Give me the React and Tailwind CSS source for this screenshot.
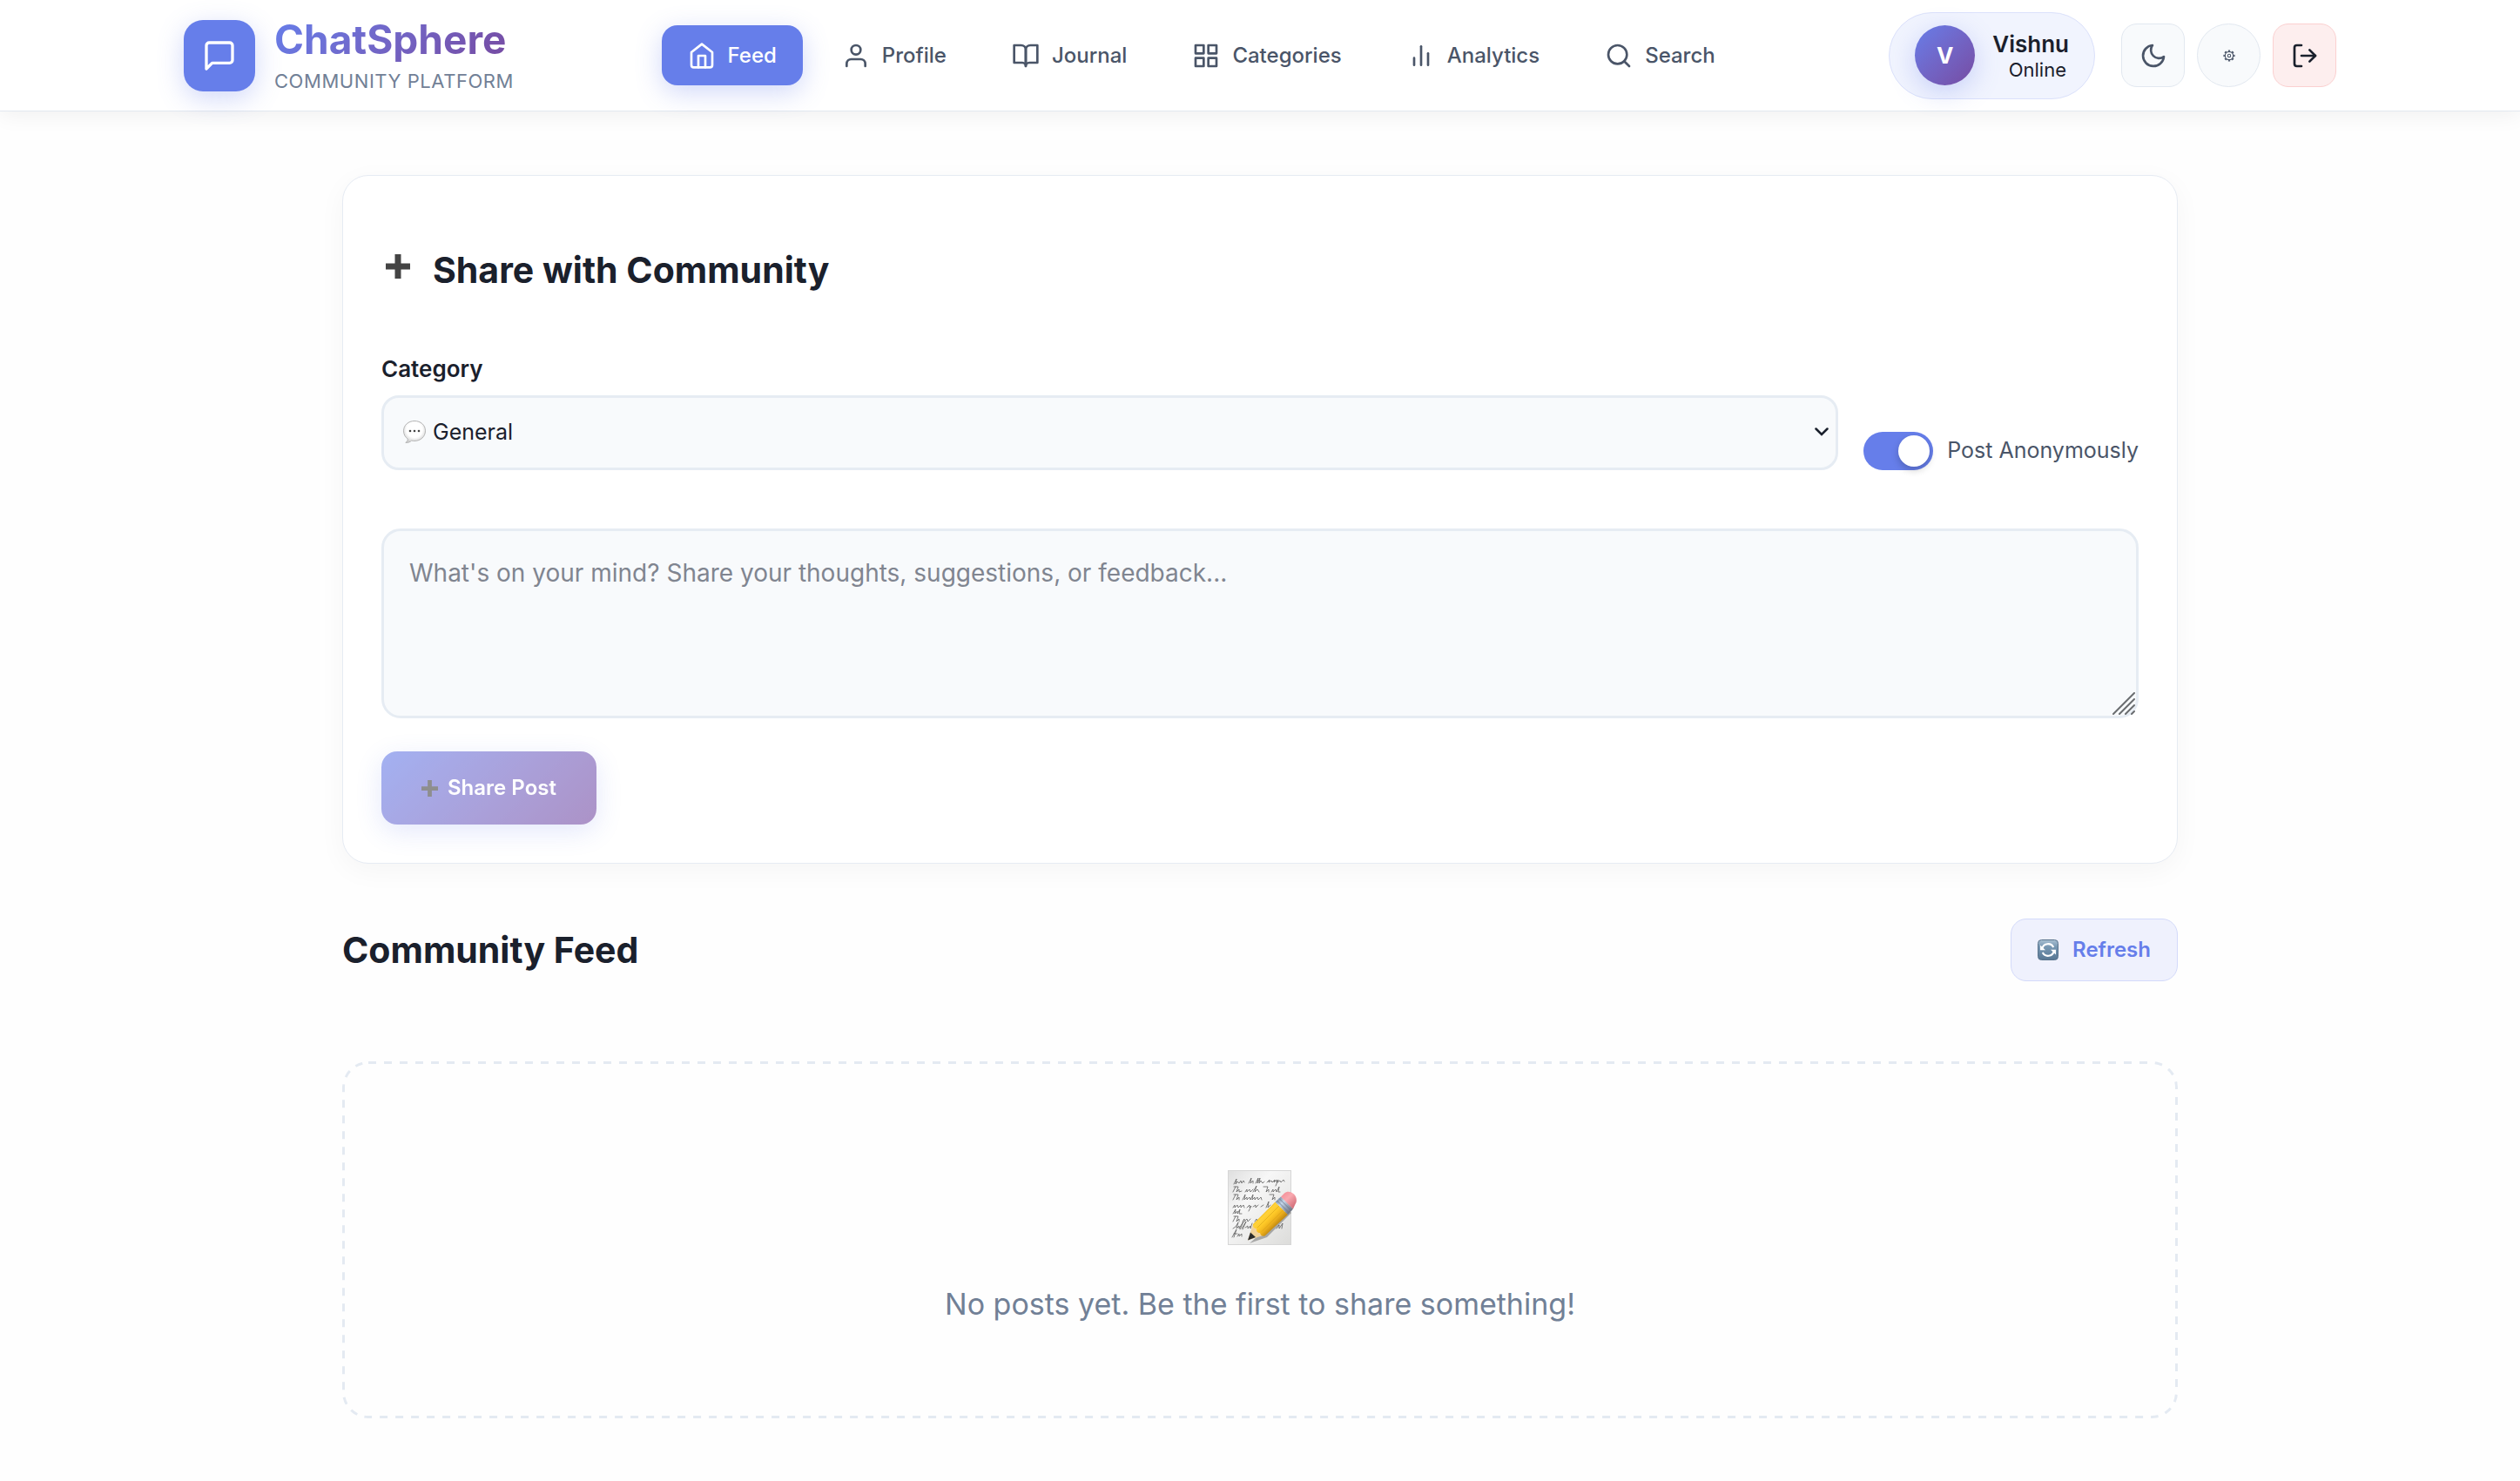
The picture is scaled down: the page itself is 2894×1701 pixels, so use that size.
import React, { useState } from "react";

function Icon({ className = "size-8", children, strokeWidth = 2 }) {
  return (
    <svg
      viewBox="0 0 24 24"
      fill="none"
      stroke="currentColor"
      strokeWidth={strokeWidth}
      strokeLinecap="round"
      strokeLinejoin="round"
      className={"shrink-0 " + className}
      aria-hidden="true"
    >
      {children}
    </svg>
  );
}

const NAV = [
  {
    label: "Feed",
    icon: (
      <>
        <path d="M3 9l9-7 9 7v11a2 2 0 0 1-2 2H5a2 2 0 0 1-2-2z" />
        <polyline points="9 22 9 12 15 12 15 22" />
      </>
    ),
  },
  {
    label: "Profile",
    icon: (
      <>
        <path d="M20 21v-2a4 4 0 0 0-4-4H8a4 4 0 0 0-4 4v2" />
        <circle cx="12" cy="7" r="4" />
      </>
    ),
  },
  {
    label: "Journal",
    icon: (
      <>
        <path d="M2 3h6a4 4 0 0 1 4 4v14a3 3 0 0 0-3-3H2z" />
        <path d="M22 3h-6a4 4 0 0 0-4 4v14a3 3 0 0 1 3-3h7z" />
      </>
    ),
  },
  {
    label: "Categories",
    icon: (
      <>
        <rect x="3" y="3" width="7" height="7" />
        <rect x="14" y="3" width="7" height="7" />
        <rect x="14" y="14" width="7" height="7" />
        <rect x="3" y="14" width="7" height="7" />
      </>
    ),
  },
  {
    label: "Analytics",
    icon: (
      <>
        <line x1="18" y1="20" x2="18" y2="10" />
        <line x1="12" y1="20" x2="12" y2="4" />
        <line x1="6" y1="20" x2="6" y2="14" />
      </>
    ),
  },
  {
    label: "Search",
    icon: (
      <>
        <circle cx="11" cy="11" r="8" />
        <path d="m21 21-4.35-4.35" />
      </>
    ),
  },
];

function Header() {
  return (
    <header className="border-b border-[#e2e8f0] bg-white shadow-[0_4px_24px_rgba(0,0,0,0.06)]">
      <div className="mx-auto flex min-h-[127px] max-w-[2472px] items-center justify-between">
        <a href="#home" className="flex items-center gap-[22px]">
          <span className="flex size-[82px] items-center justify-center rounded-[22px] bg-[#667eea] text-white shadow-[0_8px_30px_rgba(102,126,234,0.3)]">
            <Icon className="size-10">
              <path d="M21 15a2 2 0 0 1-2 2H7l-4 4V5a2 2 0 0 1 2-2h14a2 2 0 0 1 2 2z" />
            </Icon>
          </span>
          <span className="flex flex-col gap-[2px] pt-[5px]">
            <span className="self-start bg-linear-135 from-[#667eea] to-[#764ba2] bg-clip-text text-[46px] leading-[52px] font-bold text-transparent">
              ChatSphere
            </span>
            <span className="text-[22px] leading-[40px] tracking-wide text-[#718096]">COMMUNITY PLATFORM</span>
          </span>
        </a>

        <nav className="flex items-center gap-[15px]">
          {NAV.map((item, i) => (
            <a
              key={item.label}
              href={"#" + item.label.toLowerCase()}
              className={
                i === 0
                  ? "flex h-[69px] items-center gap-[14px] rounded-[18px] bg-[#667eea] px-[30px] text-[24px] font-medium text-white shadow-[0_8px_30px_rgba(102,126,234,0.3)]"
                  : "flex h-[69px] items-center gap-[14px] rounded-[18px] px-[30px] text-[24px] font-medium text-[#4a5568]"
              }
            >
              <Icon>{item.icon}</Icon>
              {item.label}
            </a>
          ))}
        </nav>

        <div className="flex items-center gap-[30px]">
          <div className="flex h-[100px] items-center gap-[20px] rounded-full border border-[#dbe1fb] bg-[#f1f4fe] px-[29px]">
            <span className="flex size-[69px] items-center justify-center rounded-full bg-linear-135 from-[#667eea] to-[#764ba2] text-[26px] font-bold text-white shadow-[0_8px_30px_rgba(102,126,234,0.3)]">
              V
            </span>
            <span className="flex flex-col items-end">
              <span className="text-[26px] leading-[32px] font-semibold text-[#1a202c]">Vishnu</span>
              <span className="pr-[3px] text-[22px] leading-[26px] text-[#1a202c]">Online</span>
            </span>
          </div>
          <div className="flex items-center gap-[14px]">
            <button
              type="button"
              aria-label="Dark mode"
              className="flex size-[73px] items-center justify-center rounded-[18px] border border-[#e2e8f0] bg-[#f8fafc] text-[#4a5568]"
            >
              <Icon>
                <path d="M21 12.79A9 9 0 1 1 11.21 3 7 7 0 0 0 21 12.79z" />
              </Icon>
            </button>
            <button
              type="button"
              aria-label="Settings"
              className="flex size-[73px] items-center justify-center rounded-full border border-[#e2e8f0] bg-[#f8fafc] text-[#4a5568]"
            >
              <svg viewBox="0 0 14 14" className="size-[14px]" fill="none" stroke="currentColor" aria-hidden="true">
                <circle cx="7" cy="7" r="4.700" strokeWidth="1.200" />
                <circle cx="7" cy="7" r="1.700" strokeWidth="1.100" />
                <circle cx="7" cy="7" r="5.900" strokeWidth="1.400" pathLength="16" strokeDasharray="1 1" strokeDashoffset="0.500" />
              </svg>
            </button>
            <button
              type="button"
              aria-label="Log out"
              className="flex size-[73px] items-center justify-center rounded-[18px] border border-[#fbd0d0] bg-[#fdeeee] text-[#1a202c]"
            >
              <Icon>
                <path d="M9 21H5a2 2 0 0 1-2-2V5a2 2 0 0 1 2-2h4" />
                <polyline points="16 17 21 12 16 7" />
                <line x1="21" y1="12" x2="9" y2="12" />
              </Icon>
            </button>
          </div>
        </div>
      </div>
    </header>
  );
}

function Plus({ className }) {
  return (
    <svg viewBox="0 0 28 28" fill="currentColor" className={"shrink-0 " + className} aria-hidden="true">
      <path d="M10.500 0h7v10.500H28v7H17.500V28h-7V17.500H0v-7h10.500z" />
    </svg>
  );
}

function SpeechBalloon({ className }) {
  return (
    <svg viewBox="0 0 28 28" className={className} aria-hidden="true">
      <defs>
        <radialGradient id="balloon" cx="0.5" cy="0.4" r="0.6">
          <stop offset="0.6" stopColor="#ffffff" />
          <stop offset="1" stopColor="#cfcfcf" />
        </radialGradient>
      </defs>
      <path
        d="M14 1.500C7 1.500 1.500 6.300 1.500 12.800c0 4 1.800 7.200 4.700 9.200 .2 1.700-.6 3.200-2.400 4.400 2.800 .2 5.200-.6 6.800-2.400 1.100 .3 2.200 .4 3.400 .4 7 0 12.500-4.900 12.500-11.600S21 1.500 14 1.500z"
        fill="url(#balloon)"
        stroke="#b5b5b5"
        strokeWidth="1"
      />
      <circle cx="9" cy="13" r="1.300" fill="#444" />
      <circle cx="14" cy="13" r="1.300" fill="#444" />
      <circle cx="19" cy="13" r="1.300" fill="#444" />
    </svg>
  );
}

function RefreshTile() {
  return (
    <svg viewBox="0 0 24 24" className="size-6 shrink-0" aria-hidden="true">
      <defs>
        <linearGradient id="tile" x1="0" y1="0" x2="0" y2="1">
          <stop offset="0" stopColor="#a9c0d2" />
          <stop offset="0.35" stopColor="#7898b3" />
          <stop offset="1" stopColor="#587793" />
        </linearGradient>
      </defs>
      <rect x="0.5" y="0.5" width="23" height="23" rx="4" fill="url(#tile)" stroke="#5a748c" />
      <path d="M5.200 10.500a7 7 0 0 1 13-1.500" fill="none" stroke="#fff" strokeWidth="2.200" />
      <path d="M18.800 13.500a7 7 0 0 1-13 1.500" fill="none" stroke="#fff" strokeWidth="2.200" />
      <path d="M3 6.500v5.700h6z" fill="#fff" />
      <path d="M21 17.500v-5.700h-6z" fill="#fff" />
    </svg>
  );
}

function MemoIcon() {
  return (
    <svg viewBox="-4 0 84 88" className="h-[88px] w-[84px]" aria-hidden="true">
      <defs>
        <linearGradient id="paper" x1="0" y1="0" x2="1" y2="1">
          <stop offset="0" stopColor="#dfdfdf" />
          <stop offset="0.35" stopColor="#f7f7f7" />
          <stop offset="1" stopColor="#dcdcda" />
        </linearGradient>
        <linearGradient id="pencil" gradientUnits="userSpaceOnUse" x1="42" y1="50" x2="57" y2="65">
          <stop offset="0" stopColor="#f3b90f" />
          <stop offset="0.12" stopColor="#ffd23c" />
          <stop offset="0.4" stopColor="#ffca28" />
          <stop offset="0.7" stopColor="#edb01c" />
          <stop offset="1" stopColor="#bf8710" />
        </linearGradient>
        <linearGradient id="ferrule" gradientUnits="userSpaceOnUse" x1="58" y1="35" x2="73" y2="50">
          <stop offset="0" stopColor="#7f93ab" />
          <stop offset="0.3" stopColor="#c5d6e8" />
          <stop offset="0.6" stopColor="#9aa6b8" />
          <stop offset="1" stopColor="#6c6f7a" />
        </linearGradient>
        <linearGradient id="eraser" gradientUnits="userSpaceOnUse" x1="64" y1="27" x2="79" y2="43">
          <stop offset="0" stopColor="#f58f98" />
          <stop offset="0.4" stopColor="#f9a9b0" />
          <stop offset="1" stopColor="#cf6873" />
        </linearGradient>
      </defs>
      <rect x="1.500" y="1.500" width="72" height="85" fill="url(#paper)" stroke="#d6d6d6" />
      <g fill="none" stroke="#606060" strokeWidth="0.800" strokeLinecap="round" strokeLinejoin="round">
        <path d="M8 17l3-6-1 6 2-3 2 2 2-3 1 3 2-3 1 2M25 16l3-6-1 6 3-3v3M33 16l3-6-1 6 3-6-1 6 2-3 2 3 2-2M46 15l3-3-1 3 3-2 1 2 3-3-1 3 3-3 0 3 2-3-3 7M58 15l3-2 1 2 3-3 1 2" />
        <path d="M7 26l3-6M8 20h5l-2 6 3-3v3l3-1M21 26l2-3v3l3-3 1 3 3-3M30 26l4-7-2 7 3-3 2 3M42 20h5l-2 6 3-3v3M51 26l2-3v3l3-3 1 3 3-6-1 6h2" />
        <path d="M7 35l3-6M8 29h5l-2 6 3-3v3M18 35l3-6-1 6 3-3v3l3-3 1 3 3-6-1 6 3-3v3l3-3 1 3 3-3 1 3M49 29h5l-2 6 3-3v3" />
        <path d="M7 44l2-3v3l3-3 1 3 3-3v3l3-3 1 3M23 44l3-3v3l2-2-3 6M30 43l3-2v3l3-3M39 43l3-2M45 44l3-7-1 7 3-3" />
        <path d="M7 51l3-5-1 5 3-3v3l3-5-1 5h3" />
        <path d="M7 60l3-6M8 54h5l-2 6 3-3v3M18 60l2-3v3l3-3 1 3 3-3M32 60l2-3 1 3 2-3" />
        <path d="M7 68l3-2 3-5-2 7 3-3v3l5-8-4 9M17 68l5-8-4 9M21 67l3-2v3l3-3v3l2-6" />
        <path d="M6 78l5-9-3 9M8 74h4M12 77l2-3v3l3-3v3" />
        <path d="M57 68l3-4v4l4-6-1 6" />
      </g>
      <path d="M26 85l20-7 28-28-4-4z" fill="#000" opacity="0.280" />
      <path d="M24 81.500L30 63l13 12.500z" fill="#f1d29a" />
      <path d="M24 81.500l3-9 6 5.500z" fill="#2b2b2b" />
      <path d="M30 63l25.500-25.500L70 52 43.500 76.500c-3 1-5-1-5.500-3.500-3 0-4.500-2-4-5-2.500 0-4.500-2-4-5z" fill="url(#pencil)" />
      <path d="M35 67l25-25M40 71.500l25-25" stroke="#cf9a12" strokeWidth="0.700" opacity="0.700" />
      <path d="M55.500 37.500l6.500-6L76 45.500 70 52z" fill="url(#ferrule)" />
      <path d="M57.500 36L71.500 50M60 33.500l14 14" stroke="#66758a" strokeWidth="0.800" />
      <path d="M62 31.500l4-4c3-3 8-2 11 1s4 8 1.500 11.500L76 45.500z" fill="url(#eraser)" />
    </svg>
  );
}

function ShareCard() {
  const [anonymous, setAnonymous] = useState(true);
  return (
    <section className="rounded-[30px] border border-[#e6ebf3] bg-white p-[44px] shadow-[0_8px_32px_rgba(0,0,0,0.04)]">
      <h2 className="mt-[38px] flex items-center gap-[26px] pl-[5px] text-[41px] leading-[52px] font-bold text-[#1a202c]">
        <Plus className="h-9 w-7 pb-2 text-[#444444]" />
        Share with Community
      </h2>

      <div className="mt-[72px] flex items-end gap-[29px]">
        <div className="flex flex-1 flex-col gap-[14px]">
          <label htmlFor="category" className="text-[26px] leading-[32px] font-semibold text-[#1a202c]">
            Category
          </label>
          <div className="relative">
            <select
              id="category"
              className="block h-[86px] w-full appearance-none rounded-[20px] border-3 border-[#e6ecf3] bg-[#f8fafc] pr-[60px] pl-[56px] text-[25px] text-[#1a202c]"
            >
              <option>General</option>
            </select>
            <SpeechBalloon className="pointer-events-none absolute top-[28px] left-6 size-7" />
            <svg
              viewBox="0 0 16 10"
              className="pointer-events-none absolute top-[37px] right-[11px] h-[10px] w-4"
              fill="none"
              stroke="#1a202c"
              strokeWidth="2.500"
              aria-hidden="true"
            >
              <path d="M1.500 1.500L8 8l6.500-6.500" strokeLinecap="round" />
            </svg>
          </div>
        </div>
        <label className="flex h-11 items-center gap-4 text-[25px] text-[#4a5568]">
          <input
            type="checkbox"
            checked={anonymous}
            onChange={(e) => setAnonymous(e.target.checked)}
            className="flex h-11 w-20 appearance-none items-center rounded-full bg-[#cbd5e0] px-1 before:size-9 before:rounded-full before:bg-white before:shadow-[0_4px_8px_rgba(0,0,0,0.2)] before:content-[''] checked:justify-end checked:bg-[#667eea]"
          />
          Post Anonymously
        </label>
      </div>

      <div className="relative mt-[67px]">
        <textarea
          aria-label="Post content"
          placeholder="What's on your mind? Share your thoughts, suggestions, or feedback..."
          className="block h-[218px] w-full resize-none rounded-[22px] border-3 border-[#e6ecf3] bg-[#f8fafc] px-[29px] py-[25px] text-[28px] leading-[46px] text-[#1a202c] placeholder:text-[#808590]"
        />
        <svg
          viewBox="0 0 26 26"
          className="pointer-events-none absolute right-1 bottom-1 size-[26px]"
          stroke="#6b6d70"
          strokeWidth="2"
          strokeLinecap="round"
          aria-hidden="true"
        >
          <path d="M1 25L25 1M8 25L25 8M15 25l10-10M22 25l3-3" />
        </svg>
      </div>

      <button
        type="button"
        className="mt-[38px] flex h-[84px] items-center gap-[11px] rounded-[18px] bg-linear-135 from-[#667eea] to-[#764ba2] px-[46px] text-[24px] font-semibold text-white opacity-60 shadow-[0_8px_30px_rgba(102,126,234,0.3)]"
      >
        <Plus className="size-[19px] text-[#444444]" />
        Share Post
      </button>
    </section>
  );
}

function EmptyState() {
  return (
    <div className="relative mt-[92px] flex flex-col items-center overflow-hidden rounded-[30px] px-8 pt-[124px] pb-[106px]">
      <svg className="pointer-events-none absolute inset-0 size-full" aria-hidden="true">
        <rect
          width="100%"
          height="100%"
          rx="30"
          fill="none"
          stroke="#e4eaf2"
          strokeWidth="6"
          strokeDasharray="9 9"
        />
      </svg>
      <MemoIcon />
      <p className="mt-[42px] text-[34px] leading-[50px] text-[#718096]">
        No posts yet. Be the first to share something!
      </p>
    </div>
  );
}

export default function App() {
  return (
    <div className="min-h-screen bg-[#fefefe] font-['Inter',sans-serif]">
      <Header />
      <main className="mx-auto max-w-[2108px] pt-[73px] pb-[72px]">
        <ShareCard />
        <div className="mt-[63px] flex items-center justify-between">
          <h2 className="text-[41px] leading-[52px] font-bold text-[#1a202c]">Community Feed</h2>
          <button
            type="button"
            className="flex h-[72px] items-center gap-4 rounded-[18px] border border-[#d3dafa] bg-[#eff1fd] px-[30px] text-[24px] font-semibold text-[#667eea]"
          >
            <RefreshTile />
            Refresh
          </button>
        </div>
        <EmptyState />
      </main>
    </div>
  );
}
